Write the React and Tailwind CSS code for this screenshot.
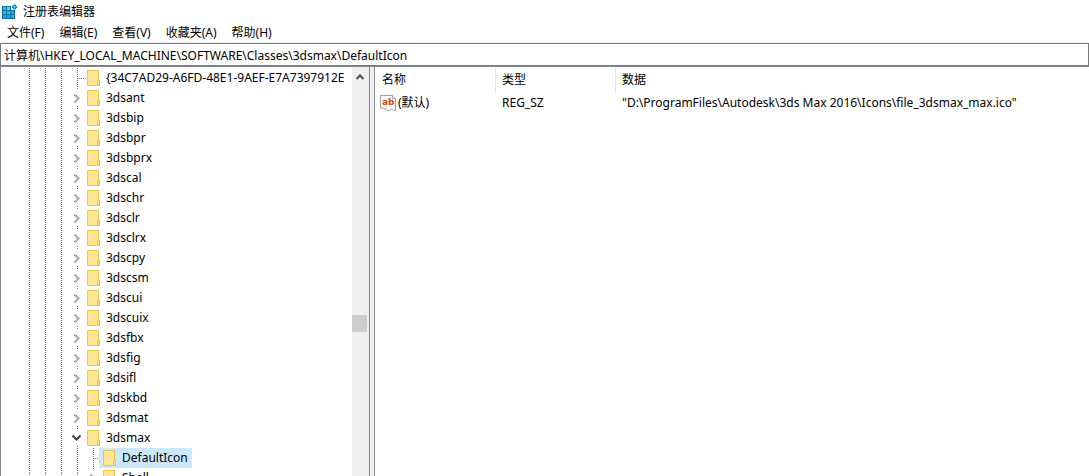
import React from 'react';

const MENUS = ['文件(F)', '编辑(E)', '查看(V)', '收藏夹(A)', '帮助(H)'];

const KEYS = [
    { name: '{34C7AD29-A6FD-48E1-9AEF-E7A7397912E', state: 'leaf' },
    { name: '3dsant', state: 'closed' },
    { name: '3dsbip', state: 'closed' },
    { name: '3dsbpr', state: 'closed' },
    { name: '3dsbprx', state: 'closed' },
    { name: '3dscal', state: 'closed' },
    { name: '3dschr', state: 'closed' },
    { name: '3dsclr', state: 'closed' },
    { name: '3dsclrx', state: 'closed' },
    { name: '3dscpy', state: 'closed' },
    { name: '3dscsm', state: 'closed' },
    { name: '3dscui', state: 'closed' },
    { name: '3dscuix', state: 'closed' },
    { name: '3dsfbx', state: 'closed' },
    { name: '3dsfig', state: 'closed' },
    { name: '3dsifl', state: 'closed' },
    { name: '3dskbd', state: 'closed' },
    { name: '3dsmat', state: 'closed' },
    { name: '3dsmax', state: 'open' },
    { name: 'DefaultIcon', state: 'leaf', nested: true, selected: true },
    { name: 'Shell', state: 'closed', nested: true },
];

const VALUES = [
    {
        name: '(默认)',
        type: 'REG_SZ',
        data: '"D:\\ProgramFiles\\Autodesk\\3ds Max 2016\\Icons\\file_3dsmax_max.ico"',
    },
];

const RegeditIcon = () => (
    <svg className="h-4 w-4" viewBox="0 0 16 16" aria-hidden="true">
        <path d="M0 2h9v4h4v9H0z" fill="#0b6f9f" />
        <path d="M1 3h3v3H1zM1 7h3v3H1zM5 7h3v3H5z" fill="#35b8e8" />
        <path d="M5 3h3v3H5z" fill="#5fd0f4" />
        <path d="M1 11h3v3H1zM5 11h3v3H5zM9 11h3v3H9zM9 7h3v3H9z" fill="#27a5d9" />
        <path d="M12.5 0 15.5 3l-3 3-3-3z" fill="#0b7fb4" />
        <path d="M12.5 1.5 14 3l-1.5 1.5L11 3z" fill="#4cc4ee" />
    </svg>
);

const FolderIcon = () => (
    <svg className="h-4 w-[13px] shrink-0" viewBox="0 0 13 16" aria-hidden="true">
        <path d="M.5.5h11v9.5h1v5.5H.5z" fill="#ffe694" stroke="#ecc84c" />
        <path d="M10.500 15.500v-4l1-1.500h1v5.500z" fill="#ffe28a" stroke="#e8bf3c" />
    </svg>
);

const StringIcon = () => (
    <svg className="h-4 w-4 shrink-0" viewBox="0 0 16 16" aria-hidden="true">
        <path
            d="M.5.5h12l3 3v12h-2l-2-1.500-2 1.500h-2l-1.500-2-2 .5-1.500-1H.5z"
            fill="#f8f8f8"
            stroke="#a3a3a3"
        />
        <path d="M12.500.5v3h3" fill="#fff" stroke="#a3a3a3" />
        <text
            x="2"
            y="10"
            fontSize="9"
            fontWeight="700"
            fill="#d9481c"
            fontFamily="'DejaVu Sans', sans-serif"
        >
            ab
        </text>
    </svg>
);

// One 16px indent column: dotted guide, branch or expander.
const Guide = ({ kind }) => (
    <svg
        className="h-5 w-4 shrink-0 overflow-visible"
        viewBox="0 0 16 20"
        fill="none"
        aria-hidden="true"
    >
        {(kind === 'line' || kind === 'leaf') && (
            <path d="M10.500 0v20" stroke="#6f6f6f" strokeDasharray="1 1" />
        )}
        {kind === 'leaf' && (
            <path d="M10 10.500h7" stroke="#6f6f6f" strokeDasharray="1 1" />
        )}
        {(kind === 'closed' || kind === 'open') && (
            <path d="M10.500 0v1M10.500 18v1" stroke="#6f6f6f" />
        )}
        {kind === 'closed' && (
            <path d="m7.500 6.500 4 4-4 4" stroke="#a6a6a6" strokeWidth="2" />
        )}
        {kind === 'open' && (
            <path d="m5.500 7.500 4 4 4-4" stroke="#404040" strokeWidth="2" />
        )}
    </svg>
);

const TreeRow = ({ item }) => (
    <li
        role="treeitem"
        aria-selected={!!item.selected}
        aria-expanded={item.state === 'leaf' ? undefined : item.state === 'open'}
        className="flex h-5 pl-[18px]"
    >
        <Guide kind="line" />
        <Guide kind="line" />
        <Guide kind="line" />
        {item.nested && <Guide kind="line" />}
        <Guide kind={item.state} />
        <button
            type="button"
            className={`flex h-5 shrink-0 items-center gap-1.5 whitespace-nowrap pl-1 pr-1 ${
                item.selected ? 'bg-[#cce8ff]' : ''
            }`}
        >
            <FolderIcon />
            {item.name}
        </button>
    </li>
);

const ScrollBar = () => (
    <div className="flex w-[17px] shrink-0 flex-col bg-[#f0f0f0] pr-0.5">
        <button
            type="button"
            aria-label="向上滚动"
            className="flex h-5 shrink-0 items-center justify-center"
        >
            <svg className="h-2 w-2" viewBox="0 0 8 8" fill="none" aria-hidden="true">
                <path d="m.5 6 3.500-3.500 3.500 3.500" stroke="#505050" strokeWidth="2" />
            </svg>
        </button>
        <div className="grow-[228]" />
        <div className="h-[17px] shrink-0 bg-[#cdcdcd]" />
        <div className="grow-[144]" />
    </div>
);

const ValueTable = () => (
    <table className="w-full table-fixed border-separate border-spacing-0 text-left">
        <colgroup>
            <col className="w-[121px]" />
            <col className="w-[120px]" />
            <col />
        </colgroup>
        <thead>
            <tr className="h-[26px]">
                <th className="border-r border-[#e5e5e5] pl-[7px] font-normal">名称</th>
                <th className="border-r border-[#e5e5e5] pl-1.5 font-normal">类型</th>
                <th className="pl-1.5 font-normal">数据</th>
            </tr>
        </thead>
        <tbody>
            {VALUES.map((value) => (
                <tr key={value.name} className="h-5 whitespace-nowrap">
                    <td className="pl-[5px]">
                        <span className="flex items-center gap-0.5">
                            <StringIcon />
                            {value.name}
                        </span>
                    </td>
                    <td className="pl-1.5">{value.type}</td>
                    <td className="pl-1.5">{value.data}</td>
                </tr>
            ))}
        </tbody>
    </table>
);

const App = () => (
    <div className="flex h-screen flex-col overflow-hidden bg-white font-['Noto_Sans','Noto_Sans_CJK_SC',sans-serif] text-[12px] leading-5 text-black">
        <header className="flex h-[23px] shrink-0 items-center gap-[5px] pl-0.5">
            <RegeditIcon />
            <h1>注册表编辑器</h1>
        </header>

        <nav className="flex h-5 shrink-0 items-center gap-px border-b border-[#f0f0f0]">
            {MENUS.map((menu) => (
                <button key={menu} type="button" className="px-[7px]">
                    {menu}
                </button>
            ))}
        </nav>

        <input
            type="text"
            aria-label="地址"
            defaultValue="计算机\HKEY_LOCAL_MACHINE\SOFTWARE\Classes\3dsmax\DefaultIcon"
            className="h-[23px] w-full shrink-0 border border-[#7a7a7a] px-[3px] outline-none"
        />

        <main className="flex min-h-0 grow border-t border-[#828790] bg-[#f0f0f0]">
            <section className="flex w-[370px] shrink-0 border-x border-[#828790] bg-white">
                <ul role="tree" className="min-w-0 grow overflow-hidden pt-px">
                    {KEYS.map((item) => (
                        <TreeRow key={item.name} item={item} />
                    ))}
                </ul>
                <ScrollBar />
            </section>
            <section className="ml-1 min-w-0 grow border-l border-[#828790] bg-white">
                <ValueTable />
            </section>
        </main>
    </div>
);

export default App;
